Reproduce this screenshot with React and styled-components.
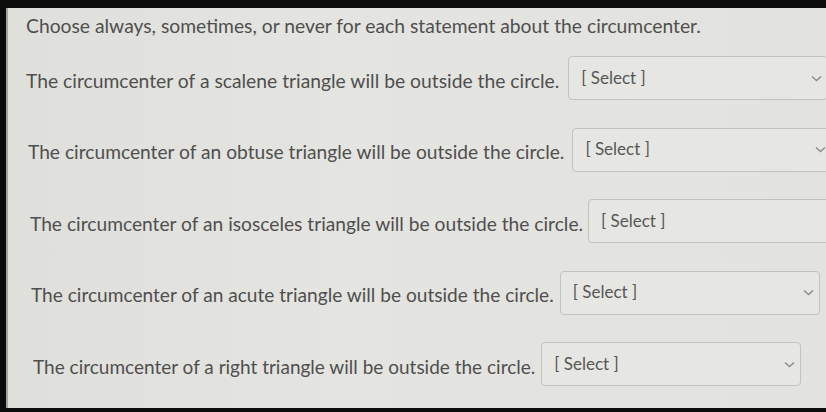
import styled, { createGlobalStyle } from "styled-components"

const GlobalStyle = createGlobalStyle`
  html, body {
    margin: 0;
    padding: 0;
    background: #0c0c0c;
    overflow: hidden;
  }
`

const Page = styled.div`
  width: 826px;
  height: 412px;
  padding-top: 8px;
  box-sizing: border-box;
  background: #0c0c0c;
`

const Panel = styled.div`
  height: 400px;
  margin-left: 6px;
  box-sizing: border-box;
  background: linear-gradient(90deg, #dfdfdb 0%, #e4e4e0 40%, #e2e2de 100%);
  border-left: 2px solid #a4a4a0;
  padding-top: 6px;
  font-family: Lato, "Open Sans", sans-serif;
  color: #4f4f4f;
  overflow: hidden;
`

const Title = styled.p`
  margin: 0 0 18px 18px;
  font-size: 19.3px;
  line-height: 24px;
  white-space: nowrap;
`

const List = styled.div`
  display: flex;
  flex-direction: column;
  gap: 27.5px;
`

const Row = styled.div`
  display: flex;
  align-items: center;
  gap: ${(p) => p.$gap}px;
  height: 44px;
  padding-left: ${(p) => p.$indent}px;
  white-space: nowrap;
`

const Statement = styled.span`
  font-size: ${(p) => p.$size}px;
  margin-top: 4px;
`

const SelectBox = styled.div`
  flex: none;
  width: 260px;
  height: 44px;
  box-sizing: border-box;
  border: 1px solid #c2c2be;
  border-radius: 4px;
  background: #e6e6e2;
  display: flex;
  align-items: center;
  justify-content: space-between;
  padding: 0 5px 0 12px;
`

const Placeholder = styled.span`
  font-size: 17px;
  color: #575757;
  margin-top: -2px;
`

const Chevron = () => (
  <svg width="11" height="7" viewBox="0 0 11 7">
    <path d="M1 1.5 L5.5 5.5 L10 1.5" fill="none" stroke="#8c8c8c" strokeWidth="1.4" />
  </svg>
)

const rows = [
  { kind: "a scalene", indent: 18, gap: 9, size: 19.3 },
  { kind: "an obtuse", indent: 20, gap: 8, size: 19.2 },
  { kind: "an isosceles", indent: 22, gap: 5, size: 19.2 },
  { kind: "an acute", indent: 23, gap: 6, size: 19.1 },
  { kind: "a right", indent: 25, gap: 6, size: 19 },
]

export default function App() {
  return (
    <Page>
      <GlobalStyle />
      <Panel>
        <Title>Choose always, sometimes, or never for each statement about the circumcenter.</Title>
        <List>
          {rows.map((r) => (
            <Row key={r.kind} $indent={r.indent} $gap={r.gap}>
              <Statement $size={r.size}>The circumcenter of {r.kind} triangle will be outside the circle.</Statement>
              <SelectBox>
                <Placeholder>[ Select ]</Placeholder>
                <Chevron />
              </SelectBox>
            </Row>
          ))}
        </List>
      </Panel>
    </Page>
  )
}
